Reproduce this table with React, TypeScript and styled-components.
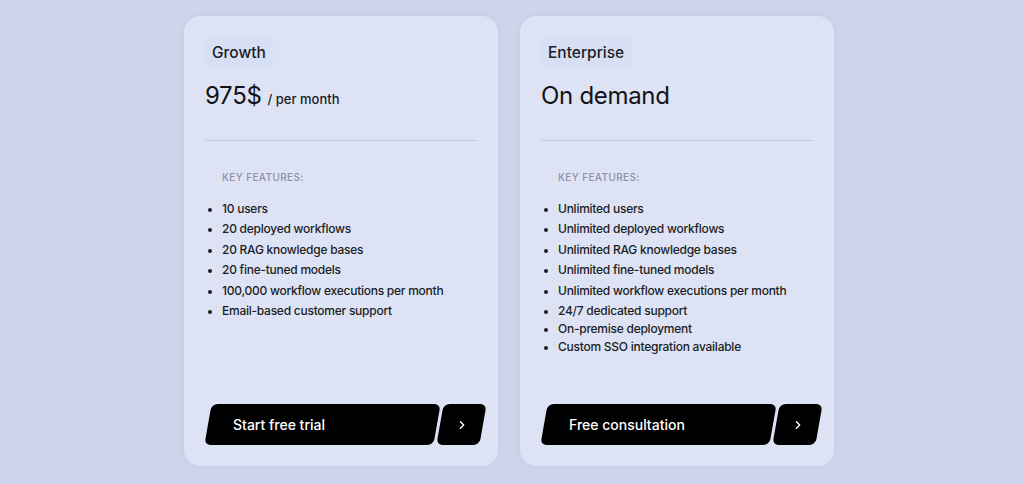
import { createGlobalStyle, styled } from 'styled-components'

const GlobalStyle = createGlobalStyle`
    html, body {
        margin: 0;
        padding: 0;
        background: #cdd5ec;
        font-family: Inter, 'Noto Sans', sans-serif;
        color: #16181d;
    }
    * {
        box-sizing: border-box;
    }
`

type Plan = {
    name: string
    price: string
    period?: string
    features: string[]
    tight?: number
    cta: string
}

const plans: Plan[] = [
    {
        name: 'Growth',
        price: '975$',
        period: '/ per month',
        features: [
            '10 users',
            '20 deployed workflows',
            '20 RAG knowledge bases',
            '20 fine-tuned models',
            '100,000 workflow executions per month',
            'Email-based customer support',
        ],
        cta: 'Start free trial',
    },
    {
        name: 'Enterprise',
        price: 'On demand',
        features: [
            'Unlimited users',
            'Unlimited deployed workflows',
            'Unlimited RAG knowledge bases',
            'Unlimited fine-tuned models',
            'Unlimited workflow executions per month',
            '24/7 dedicated support',
            'On-premise deployment',
            'Custom SSO integration available',
        ],
        tight: 5,
        cta: 'Free consultation',
    },
]

const Chevron = () => (
    <svg width="10" height="10" viewBox="0 0 10 10" fill="none">
        <path d="M3.5 1.8 L6.8 5 L3.5 8.2" stroke="#fff" strokeWidth="1.4" strokeLinecap="round" strokeLinejoin="round" />
    </svg>
)

export default function App() {
    return (
        <Page>
            <GlobalStyle />
            {plans.map((plan) => (
                <Card key={plan.name}>
                    <Badge>{plan.name}</Badge>
                    <PriceRow>
                        <Price>{plan.price}</Price>
                        {plan.period && <Period>{plan.period}</Period>}
                    </PriceRow>
                    <Divider />
                    <FeaturesLabel>KEY FEATURES:</FeaturesLabel>
                    <FeatureList>
                        {plan.features.map((f, i) => (
                            <Feature key={f} $tight={plan.tight !== undefined && i > plan.tight}>
                                {f}
                            </Feature>
                        ))}
                    </FeatureList>
                    <Actions>
                        <MainButton>
                            <span>{plan.cta}</span>
                        </MainButton>
                        <ArrowButton>
                            <span>
                                <Chevron />
                            </span>
                        </ArrowButton>
                    </Actions>
                </Card>
            ))}
        </Page>
    )
}

const Page = styled.div`
    width: 1024px;
    height: 484px;
    display: flex;
    justify-content: center;
    gap: 22px;
    padding: 16px 0 18px 0;
    margin-left: -3px;
`

const Card = styled.div`
    width: 314px;
    height: 450px;
    background: #dde3f4;
    border-radius: 16px;
    box-shadow: 0 0 6px rgba(180, 190, 220, 0.35);
    padding: 22px 20px 21px 21px;
    display: flex;
    flex-direction: column;
`

const Badge = styled.div`
    align-self: flex-start;
    height: 28px;
    padding: 0 7px;
    display: flex;
    align-items: center;
    background: #d7dff5;
    border-radius: 3px;
    font-size: 15.5px;
    font-weight: 500;
    color: #1b1d24;
`

const PriceRow = styled.div`
    display: flex;
    align-items: baseline;
    gap: 6px;
    margin-top: 15px;
    height: 36px;
`

const Price = styled.span`
    font-size: 24px;
    font-weight: 400;
    letter-spacing: -0.3px;
    color: #111318;
`

const Period = styled.span`
    font-size: 13px;
    font-weight: 500;
    color: #1b1d24;
`

const Divider = styled.div`
    height: 1px;
    background: #c4cbe0;
    margin-top: 23px;
`

const FeaturesLabel = styled.div`
    margin-top: 30px;
    padding-left: 17px;
    font-size: 10px;
    font-weight: 500;
    letter-spacing: 0.4px;
    color: #8c92a3;
`

const FeatureList = styled.ul`
    margin: 17px 0 0 0;
    padding: 0 0 0 17px;
    list-style: disc;
    flex: 1;
`

const Feature = styled.li<{ $tight?: boolean }>`
    font-size: 12px;
    font-weight: 500;
    line-height: 17px;
    margin-top: ${(p) => (p.$tight ? '1px' : '3.4px')};
    color: #1b1d24;
    letter-spacing: -0.25px;
    &:first-child {
        margin-top: 0;
    }
    &::marker {
        font-size: 11px;
    }
`

const Actions = styled.div`
    display: flex;
    gap: 3px;
    height: 41px;
    padding-left: 3px;
`

const Slant = styled.div`
    height: 41px;
    background: #000;
    border-radius: 6px;
    transform: skewX(-10deg);
    display: flex;
    align-items: center;
    color: #fff;
    & > span {
        transform: skewX(10deg);
        display: flex;
        align-items: center;
    }
`

const MainButton = styled(Slant)`
    width: 229px;
    flex-shrink: 0;
    padding-left: 25px;
    font-size: 14px;
    font-weight: 500;
`

const ArrowButton = styled(Slant)`
    width: 43px;
    flex-shrink: 0;
    justify-content: center;
`
